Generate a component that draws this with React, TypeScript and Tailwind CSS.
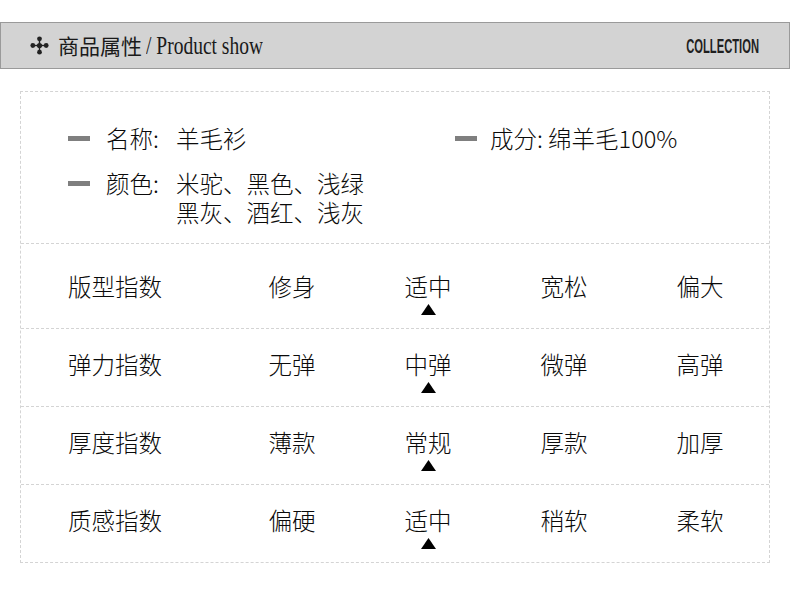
import React from "react";

const cjk = { fontFamily: '"Noto Sans CJK SC", "Noto Sans", sans-serif' };

function Tri() {
  return (
    <svg width="15" height="11" viewBox="0 0 15 11" className="block">
      <polygon points="7.5,0 15,11 0,11" fill="#000" />
    </svg>
  );
}

function Cross() {
  return (
    <svg width="19" height="19" viewBox="0 0 19 19" className="block">
      <line x1="9.5" y1="2" x2="9.5" y2="17" stroke="#222" strokeWidth="1.4" />
      <line x1="2" y1="9.5" x2="17" y2="9.5" stroke="#222" strokeWidth="1.4" />
      <circle cx="9.5" cy="9.5" r="2.6" fill="#222" />
      <circle cx="9.5" cy="2.8" r="2.4" fill="#222" />
      <circle cx="9.5" cy="16.2" r="2.4" fill="#222" />
      <circle cx="2.8" cy="9.5" r="2.4" fill="#222" />
      <circle cx="16.2" cy="9.5" r="2.4" fill="#222" />
    </svg>
  );
}

const rows: { label: string; opts: string[]; sel: number }[] = [
  { label: "版型指数", opts: ["修身", "适中", "宽松", "偏大"], sel: 1 },
  { label: "弹力指数", opts: ["无弹", "中弹", "微弹", "高弹"], sel: 1 },
  { label: "厚度指数", opts: ["薄款", "常规", "厚款", "加厚"], sel: 1 },
  { label: "质感指数", opts: ["偏硬", "适中", "稍软", "柔软"], sel: 1 },
];

function Bar() {
  return <div className="w-[22px] h-[5px] bg-[#7f7f7f] shrink-0" />;
}

export default function App() {
  return (
    <div className="w-[790px] h-[591px] bg-white text-[#0a0a0a] pt-[22px] font-light" style={cjk}>
      <div className="h-[47px] bg-[#d3d3d3] border border-[#9a9a9a] flex items-center pl-[29px] pr-[30px]">
        <Cross />
        <div className="ml-[9px] flex items-center text-[21px] leading-none text-[#1a1a1a] font-normal">
          <span>商品属性</span>
          <span
            className="ml-[4px] inline-block origin-left scale-x-[0.78] text-[25px]"
            style={{ fontFamily: '"Liberation Serif", serif' }}
          >
            / Product show
          </span>
        </div>
        <div className="flex-1" />
        <span
          className="inline-block origin-right scale-x-[0.56] font-bold text-[20px] leading-none text-[#1f1f1f]"
          style={{ fontFamily: '"Liberation Sans Narrow", "Liberation Sans", sans-serif' }}
        >
          COLLECTION
        </span>
      </div>

      <div className="mt-[22px] ml-[20px] w-[750px] border border-dashed border-[#d4d4d4]">
        <div className="pt-[32px] pb-[16px] pl-[47px] text-[23.5px] leading-[29px]">
          <div className="flex items-center">
            <div className="w-[387px] flex items-center">
              <Bar />
              <span className="ml-[16px] w-[70px]">名称:</span>
              <span>羊毛衫</span>
            </div>
            <div className="flex items-center">
              <Bar />
              <span className="ml-[13px]">成分: 绵羊毛100%</span>
            </div>
          </div>
          <div className="flex mt-[16px]">
            <div className="h-[29px] flex items-center">
              <Bar />
            </div>
            <span className="ml-[16px] w-[70px]">颜色:</span>
            <div>
              <div>米驼、黑色、浅绿</div>
              <div>黑灰、酒红、浅灰</div>
            </div>
          </div>
        </div>
        {rows.map((r, i) => (
          <div
            key={r.label}
            className={
              "border-t border-dashed border-[#d4d4d4] flex pl-[47px] text-[23.5px] leading-[29px] " +
              (i === 0 ? "h-[85px]" : "h-[78px]")
            }
          >
            <div className={"w-[156px] " + (i === 0 ? "pt-[28px]" : "pt-[21px]")}>{r.label}</div>
            {r.opts.map((o, j) => (
              <div
                key={o}
                className={"w-[136px] flex flex-col items-center " + (i === 0 ? "pt-[28px]" : "pt-[21px]")}
              >
                <span>{o}</span>
                {j === r.sel && (
                  <div className="mt-[3px]">
                    <Tri />
                  </div>
                )}
              </div>
            ))}
          </div>
        ))}
      </div>
    </div>
  );
}
